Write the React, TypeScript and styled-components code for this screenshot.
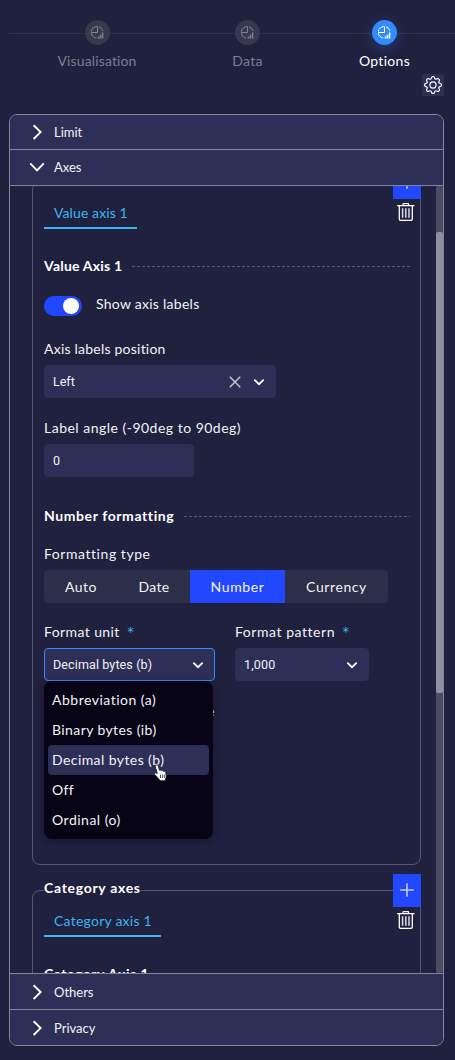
import React from "react";
import styled, { createGlobalStyle, css } from "styled-components";
import { BsGear } from "react-icons/bs";

const c = {
  bg: "#20213f",
  raised: "#2e2f57",
  line: "#84849a",
  faint: "#55566f",
  blue: "#2248ff",
  sky: "#3cb4f0",
  text: "#f2f2f7",
};

const Global = createGlobalStyle`
  * { box-sizing: border-box; }
  html, body { margin: 0; background: ${c.bg}; }
  body { font-family: Lato, "Open Sans", sans-serif; color: ${c.text}; font-size: 14px; }
  svg { display: block; flex: none; }
`;

const Txt = styled.span<{ $ls?: number }>`
  white-space: nowrap;
  letter-spacing: ${(p) => p.$ls ?? 0}px;
`;

const Page = styled.div`
  width: 455px;
  height: 1060px;
  overflow: hidden;
  background: ${c.bg};
`;

const Stepper = styled.header`
  display: grid;
  grid-template-columns: 176px 125px 149px;
  height: 74px;
  padding: 20px 0 0 9px;
  background: linear-gradient(#2f304b, #2f304b) 9px 33px / 446px 1px no-repeat;
`;

const Step = styled.div<{ $active?: boolean }>`
  display: flex;
  flex-direction: column;
  align-items: center;
  gap: 7px;
  line-height: 17px;
  color: ${(p) => (p.$active ? "#ffffff" : "#7d7d90")};
`;

const StepDot = styled.div<{ $active?: boolean }>`
  display: grid;
  place-items: center;
  width: 25px;
  height: 25px;
  border-radius: 50%;
  background: ${(p) => (p.$active ? "#318bff" : "#383951")};
  color: ${(p) => (p.$active ? "#ffffff" : "#828293")};
  ${(p) => p.$active && css`box-shadow: 0 3px 14px rgba(49, 139, 255, 0.28);`}
`;

const Tools = styled.div`
  display: flex;
  justify-content: flex-end;
  height: 40px;
  padding-right: 11px;
`;

const GearButton = styled.div`
  display: grid;
  place-items: center;
  width: 22px;
  height: 22px;
  border-radius: 2px;
  background: ${c.raised};
  color: #fff;
`;

const Panel = styled.main`
  display: flex;
  flex-direction: column;
  width: 435px;
  height: 932px;
  margin-left: 9px;
  border: 1px solid ${c.line};
  border-radius: 8px;
  overflow: hidden;
`;

const Row = styled.div<{ $h: number; $edge?: "top" | "bottom" }>`
  display: flex;
  align-items: center;
  flex: none;
  gap: 7px;
  height: ${(p) => p.$h}px;
  padding-left: 17px;
  background: ${c.raised};
  font-size: 13px;
  letter-spacing: -0.1px;
  ${(p) => p.$edge && `border-${p.$edge}: 1px solid ${c.line};`}
  ${(p) => p.$edge === "bottom" && "padding-bottom: 1px;"}
`;

const Body = styled.div`
  display: flex;
  flex: 1;
  min-height: 0;
  overflow: hidden;
`;

const Scroll = styled.div`
  width: 389px;
  margin-left: 22px;
  margin-right: 15px;
  flex: none;
`;

const Track = styled.div`
  width: 7px;
  padding-top: 46px;
  background: #4d4c63;
  border-radius: 2px;
`;

const Thumb = styled.div`
  height: 461px;
  border-radius: 2px;
  background: #918fa2;
`;

const Group = styled.section<{ $h: number; $top: number }>`
  display: flex;
  flex-direction: column;
  position: relative;
  height: ${(p) => p.$h}px;
  margin-top: ${(p) => p.$top}px;
  padding: 0 10px 0 11px;
  border: 1px solid ${c.faint};
  border-radius: 8px;
`;

const Legend = styled.div`
  position: absolute;
  left: 11px;
  top: -13px;
  height: 20px;
  line-height: 20px;
  font-weight: 700;
  color: #fff;
  background: ${c.bg};
`;

const Actions = styled.div`
  position: absolute;
  right: -1px;
  top: -17px;
  width: 28px;
  display: flex;
  flex-direction: column;
  align-items: center;
  gap: 4px;
`;

const AddButton = styled.div`
  display: grid;
  place-items: center;
  width: 28px;
  height: 33px;
  padding-bottom: 1px;
  background: ${c.blue};
`;

const Tab = styled.div<{ $w: number }>`
  display: flex;
  align-items: center;
  flex: none;
  width: ${(p) => p.$w}px;
  height: 32px;
  margin-top: 14px;
  padding-left: 10px;
  color: ${c.sky};
  border-bottom: 2px solid ${c.sky};
`;

const Heading = styled.div<{ $top: number }>`
  display: flex;
  align-items: center;
  flex: none;
  height: 20px;
  margin-top: ${(p) => p.$top}px;
  font-weight: 700;
  color: #fff;
`;

const Dashes = styled.div<{ $w: number }>`
  width: ${(p) => p.$w}px;
  height: 1px;
  margin: 2px 0 0 auto;
  background: repeating-linear-gradient(90deg, #58596f 0 3px, transparent 3px 5px);
`;

const ToggleLine = styled.div`
  display: flex;
  gap: 14px;
  flex: none;
  height: 20px;
  margin-top: 21px;
  line-height: 15px;
`;

const Toggle = styled.div`
  display: flex;
  justify-content: flex-end;
  width: 38px;
  height: 20px;
  padding: 2px 3px;
  border-radius: 10px;
  background: ${c.blue};
`;

const Knob = styled.div`
  width: 16px;
  height: 16px;
  border-radius: 50%;
  background: #fff;
`;

const Label = styled.div<{ $top?: number }>`
  display: flex;
  flex: none;
  gap: 7px;
  height: 18px;
  line-height: 18px;
  margin-top: ${(p) => p.$top ?? 0}px;
`;

const Star = styled.span`
  color: ${c.sky};
  font-size: 18px;
  line-height: 21px;
`;

const Field = styled.div<{ $w: number; $top: number; $focus?: boolean }>`
  display: flex;
  align-items: center;
  flex: none;
  width: ${(p) => p.$w}px;
  height: 33px;
  margin-top: ${(p) => p.$top}px;
  padding: 0 9.5px 0 8px;
  border: 1px solid ${(p) => (p.$focus ? "#318bff" : c.raised)};
  border-radius: 4px;
  background: ${c.raised};
  font: 12.5px Roboto, sans-serif;
`;

const Icons = styled.div`
  display: flex;
  align-items: center;
  gap: 10.5px;
  margin-left: auto;
`;

const Segments = styled.div`
  display: flex;
  flex: none;
  width: 344px;
  height: 33px;
  margin-top: 7px;
  border-radius: 4px;
  background: #2d2e49;
  overflow: hidden;
`;

const Segment = styled.div<{ $w: number; $on?: boolean }>`
  display: grid;
  place-items: center;
  width: ${(p) => p.$w}px;
  background: ${(p) => (p.$on ? c.blue : "transparent")};
`;

const Pair = styled.div`
  display: flex;
  gap: 20px;
  margin-top: 20px;
`;

const Column = styled.div`
  position: relative;
  display: flex;
  flex-direction: column;
`;

const Behind = styled.div`
  display: flex;
  justify-content: flex-end;
  width: 170.5px;
  margin-top: 21px;
  line-height: 18px;
`;

const Menu = styled.div`
  position: absolute;
  left: 0;
  top: 58px;
  width: 169px;
  height: 158px;
  padding: 4px;
  border-radius: 8px;
  background: #070415;
  box-shadow: 0 2px 8px rgba(7, 4, 21, 0.35);
`;

const Option = styled.div<{ $on?: boolean }>`
  display: flex;
  align-items: center;
  height: 30px;
  padding: 0 0 2px 4px;
  border-radius: 4px;
  background: ${(p) => (p.$on ? c.raised : "transparent")};
`;

const Pointer = styled.svg`
  position: absolute;
  left: 109px;
  top: 83px;
`;

const ChartIcon = () => (
  <svg width="13" height="13" viewBox="0 0 13 13" fill="none" stroke="currentColor" strokeWidth="1">
    <path d="M6.500 .6V6.500H.6M6.500 .6A5.700 5.700 0 0 0 5.300 12M8 .8A5.700 5.700 0 0 1 12 5" />
    <path d="M7.500 10.400v2M9.500 8.800v3.600M11.600 6.600v5.800" strokeWidth="1.500" />
  </svg>
);

const Arrow = ({ open }: { open?: boolean }) => (
  <svg width="20" height="20" viewBox="0 0 20 20" fill="none" stroke="#fff" strokeWidth="1.9">
    <path d={open ? "M3.2 6.3l6.8 7 6.8-7" : "M6.6 3.2l7 6.9-7 6.9"} />
  </svg>
);

const Chevron = () => (
  <svg width="14" height="14" viewBox="0 0 14 14" fill="none" stroke="#fff" strokeWidth="1.8" strokeLinecap="round">
    <path d="M2.800 5.200l4.200 4 4.200-4" />
  </svg>
);

const Clear = () => (
  <svg width="12" height="12" viewBox="0 0 12 12" stroke="#c9c9d4" strokeWidth="1.4">
    <path d="M.8 .8l10.4 10.4M11.2 .8L.8 11.2" />
  </svg>
);

const Plus = () => (
  <svg width="14" height="14" viewBox="0 0 14 14" stroke="#c5ceff" strokeWidth="1.5">
    <path d="M7 .2v13.6M.2 7h13.6" />
  </svg>
);

const Trash = () => (
  <svg width="20" height="18" viewBox="0.7 0 20 18" fill="none" stroke="#fff">
    <path d="M.8 2.6h17.400M6.600 2.4V1.5q0-.9.9-.9h4q.9 0 .9.9v.9" strokeWidth="1.1" />
    <path d="M3 3v13.1q0 1.3 1.3 1.3h10.400q1.3 0 1.3-1.3V3" strokeWidth="1.3" />
    <path d="M6.300 5.2v9.6M9.500 5.2v9.6M12.700 5.2v9.6" strokeWidth="1.5" stroke="#dcdce4" />
  </svg>
);

const SelectGlyphs = ({ clear }: { clear?: boolean }) => (
  <Icons>
    {clear && <Clear />}
    <Chevron />
  </Icons>
);

const GroupActions = () => (
  <Actions>
    <AddButton><Plus /></AddButton>
    <Trash />
  </Actions>
);

export default function App() {
  return (
    <Page>
      <Global />
      <Stepper>
        <Step><StepDot><ChartIcon /></StepDot><Txt $ls={0.13}>Visualisation</Txt></Step>
        <Step><StepDot><ChartIcon /></StepDot><Txt $ls={0.3}>Data</Txt></Step>
        <Step $active><StepDot $active><ChartIcon /></StepDot><Txt $ls={0.3}>Options</Txt></Step>
      </Stepper>
      <Tools><GearButton><BsGear size={18} /></GearButton></Tools>
      <Panel>
        <Row $h={35} $edge="bottom"><Arrow /><Txt>Limit</Txt></Row>
        <Row $h={36} $edge="bottom"><Arrow open /><Txt>Axes</Txt></Row>
        <Body>
          <Scroll>
            <Group $h={683} $top={-4}>
              <GroupActions />
              <Tab $w={93}><Txt $ls={0.1}>Value axis 1</Txt></Tab>
              <Heading $top={26}><Txt $ls={0.22}>Value Axis 1</Txt><Dashes $w={278} /></Heading>
              <ToggleLine><Toggle><Knob /></Toggle><Txt $ls={0.27}>Show axis labels</Txt></ToggleLine>
              <Label $top={24}><Txt $ls={0.22}>Axis labels position</Txt></Label>
              <Field $w={232} $top={7}><Txt>Left</Txt><SelectGlyphs clear /></Field>
              <Label $top={21}><Txt $ls={0.49}>Label angle (-90deg to 90deg)</Txt></Label>
              <Field $w={150} $top={7}><Txt>0</Txt></Field>
              <Heading $top={28}><Txt $ls={0.6}>Number formatting</Txt><Dashes $w={226} /></Heading>
              <Label $top={20}><Txt $ls={0.55}>Formatting type</Txt></Label>
              <Segments>
                <Segment $w={74}><Txt $ls={0.45}>Auto</Txt></Segment>
                <Segment $w={72}><Txt $ls={0.35}>Date</Txt></Segment>
                <Segment $w={95} $on><Txt $ls={0.6}>Number</Txt></Segment>
                <Segment $w={103}><Txt $ls={0.6}>Currency</Txt></Segment>
              </Segments>
              <Pair>
                <Column>
                  <Label><Txt $ls={0.4}>Format unit</Txt><Star>*</Star></Label>
                  <Field $w={171} $top={7} $focus><Txt $ls={0.12}>Decimal bytes (b)</Txt><SelectGlyphs /></Field>
                  <Behind>e</Behind>
                  <Menu>
                    <Option><Txt $ls={0.5}>Abbreviation (a)</Txt></Option>
                    <Option><Txt $ls={0.4}>Binary bytes (ib)</Txt></Option>
                    <Option $on><Txt $ls={0.42}>Decimal bytes (b)</Txt></Option>
                    <Option><Txt $ls={0.4}>Off</Txt></Option>
                    <Option><Txt $ls={0.5}>Ordinal (o)</Txt></Option>
                    <Pointer width="15" height="18" viewBox="0 0 15 18">
                      <path
                        d="M3.2 1C4.2.6 5 1 5.3 2l1.2 4.3c1-.5 1.8-.2 2.1.5 1-.5 1.9-.1 2.2.6 1.1-.2 1.9.3 2 1.4l.4 3.2c.1 1.600-.4 2.500-.9 3.500v1.200H6.700l-.4-1.300C5 14.200 3.800 12.500 1.600 10.400c-.7-.8.1-1.900 1.200-1.600l1.500.8L2.300 2.600C2.100 1.900 2.500 1.200 3.200 1z"
                        fill="#fff" stroke="#111" strokeWidth=".8"
                      />
                      <path d="M7.500 10.500v3.500M9.400 10.500v3.500M11.300 10.500v3.500" stroke="#222" strokeWidth=".8" />
                    </Pointer>
                  </Menu>
                </Column>
                <Column>
                  <Label><Txt $ls={0.55}>Format pattern</Txt><Star>*</Star></Label>
                  <Field $w={134} $top={7}><Txt $ls={0.15}>1,000</Txt><SelectGlyphs /></Field>
                </Column>
              </Pair>
            </Group>
            <Group $h={200} $top={25}>
              <Legend><Txt $ls={0.7}>Category axes</Txt></Legend>
              <GroupActions />
              <Tab $w={117}><Txt $ls={0.24}>Category axis 1</Txt></Tab>
              <Heading $top={26}><Txt $ls={0.5}>Category Axis 1</Txt></Heading>
            </Group>
          </Scroll>
          <Track><Thumb /></Track>
        </Body>
        <Row $h={36} $edge="top"><Arrow /><Txt>Others</Txt></Row>
        <Row $h={36} $edge="top"><Arrow /><Txt>Privacy</Txt></Row>
      </Panel>
    </Page>
  );
}
